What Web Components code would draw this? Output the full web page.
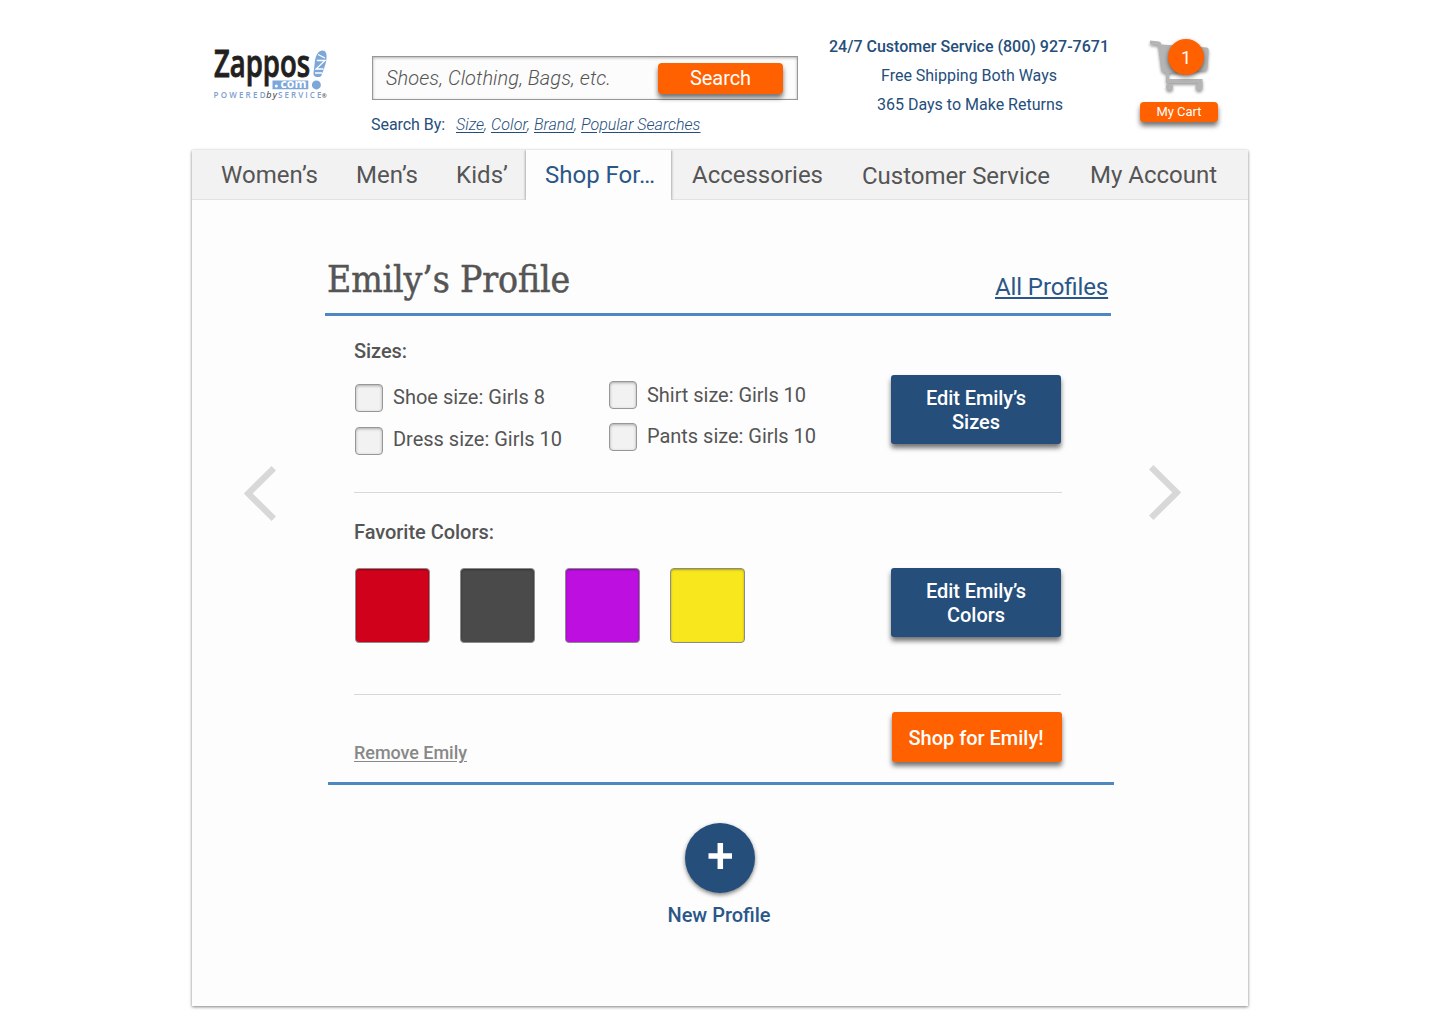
<!DOCTYPE html>
<html lang="en"><head><meta charset="utf-8"><title>Emily’s Profile</title>
<style>
body{margin:0;background:#fff;font-family:Roboto,"Liberation Sans",sans-serif;color:#555}
</style></head><body>
<shop-page></shop-page>
<script>
const define=(name,html,setup)=>customElements.define(name,class extends HTMLElement{
  connectedCallback(){
    if(this.shadowRoot)return;
    const root=this.attachShadow({mode:"open"});
    root.innerHTML=html;
    if(setup)setup(this,root);
  }
});

/* One line of text tracked so that it fills the width given in "w". */
define("fit-text",`<style>:host{display:block;white-space:nowrap;font-feature-settings:"liga" 1}span{display:inline-block;vertical-align:top}</style><span><slot></slot></span>`,(el,root)=>{
  const w=+el.getAttribute("w"),s=root.querySelector("span");
  el.style.width=w+"px";
  const natural=s.getBoundingClientRect().width;
  el.style.letterSpacing=(w-natural)/el.textContent.length+"px";
});

define("zappos-logo",`<style>:host{display:block;width:116px;height:52px}svg{display:block;overflow:visible}</style>
<svg width="116" height="52" viewBox="212 49 116 52">
<text x="214" y="77.200" font-family="Open Sans" font-weight="600" font-size="37" fill="#231f20" stroke="#231f20" stroke-width=".9" textLength="96" lengthAdjust="spacingAndGlyphs">Zappos</text>
<path d="M272.500 80.500H308.300V89.300H272.500Z" fill="#7da7d9"/>
<circle cx="276.300" cy="86" r="1.500" fill="#fff"/>
<text x="280.500" y="88" font-family="Open Sans" font-weight="700" font-size="12" fill="#fff" textLength="26" lengthAdjust="spacingAndGlyphs">com</text>
<path d="M322 50.500C326 50 327.300 54 326.300 60C325.500 66 322.500 72 321.500 75.500C320.500 78 313.800 77.500 313.500 74.500C313.500 71 314.300 68 314.600 64C315 57 317.500 51 322 50.500Z" fill="#7da7d9"/>
<path d="M318 54.500L325 58M316.800 60.500H325L316 69H323.500M315 73H322" fill="none" stroke="#fff" stroke-width="1.300"/>
<circle cx="316.400" cy="84.900" r="4.500" fill="#7da7d9"/>
<g font-family="Open Sans" font-size="8" fill="#7da0cf" font-weight="600"><text x="213.500" y="98" textLength="52">POWERED</text><text x="266.300" y="98" font-size="9" fill="#333" font-style="italic" font-weight="400" textLength="10.500">by</text><text x="278" y="98" textLength="43.500">SERVICE</text><text x="321.800" y="98" font-size="6" fill="#444">®</text></g>
</svg>`);

define("push-button",`<style>
:host{display:flex;flex-direction:column;align-items:center;justify-content:center;box-sizing:border-box;border-radius:3px;background:#254e7b;color:#fff;font-size:20px;font-weight:500;line-height:24px;width:170px;box-shadow:0 4px 5px rgba(0,0,0,.55)}
:host([kind=orange]){background:#ff6000}
</style><slot></slot>`);

define("search-box",`<style>
:host{display:block;width:426px}
.field{display:flex;box-sizing:border-box;height:44px;border:1px solid #979797;background:#fcfcfc;box-shadow:inset 0 1px 3px rgba(0,0,0,.3);padding:6px 0 0 13px}
.hint{font-size:20px;font-weight:300;font-style:italic;line-height:31px;margin-right:47px}
push-button{width:125px;height:31px;border-radius:4px;font-weight:400;padding-bottom:2px}
.by{display:flex;margin:13px 0 0 -1px;height:24px;line-height:24px;font-size:16px;color:#254e7b}
.by i{font-weight:300;display:flex}.by u{text-underline-offset:2px}
</style>
<div class="field"><fit-text class="hint" w="225">Shoes, Clothing, Bags, etc.</fit-text><push-button kind="orange"><fit-text w="61">Search</fit-text></push-button></div>
<div class="by"><fit-text w="74" style="margin-right:11px">Search By:</fit-text><i><fit-text w="31" style="margin-right:4px"><u>Size</u>,</fit-text><fit-text w="39" style="margin-right:4px"><u>Color</u>,</fit-text><fit-text w="43" style="margin-right:4px"><u>Brand</u>,</fit-text><fit-text w="119.5"><u>Popular Searches</u></fit-text></i></div>`);

define("service-info",`<style>:host{display:flex;flex-direction:column;align-items:center;width:284px;font-size:16px;line-height:29px;color:#254e7b}b{font-weight:500}</style>
<b><fit-text w="280">24/7 Customer Service (800) 927-7671</fit-text></b><fit-text w="176">Free Shipping Both Ways</fit-text><fit-text w="186" style="margin-left:2px">365 Days to Make Returns</fit-text>`);

define("cart-button",`<style>
:host{display:block;width:78px}
.icon{position:relative;height:64px}
svg{display:block;margin-left:6px;filter:drop-shadow(0 2px 1.500px rgba(0,0,0,.4))}
.count{position:absolute;left:28px;top:1px;width:36px;height:36px;border-radius:50%;background:#ff6000;color:#fff;text-align:center;font-size:18px;line-height:37px;box-shadow:0 2px 4px rgba(0,0,0,.5)}
push-button{width:78px;height:20px;font-size:13px;font-weight:400;line-height:22px;border-radius:4px}
</style>
<div class="icon"><svg width="66" height="58" viewBox="1146 38 66 58"><path d="M1150 40.500L1159 41.500Q1161 42 1161.500 44.500L1207 47.500Q1209 48 1208.700 50L1207.500 68Q1207.300 70 1205 70.500L1169 73V79H1202.500V87H1198V83H1166V73L1163 72Q1161.500 71.500 1161 69L1158 45L1150 44Z" fill="#b5b5b5"/><circle cx="1169.500" cy="87" r="3.500" fill="#b5b5b5"/><circle cx="1199" cy="87" r="3.500" fill="#b5b5b5"/></svg><div class="count">1</div></div>
<push-button kind="orange"><fit-text w="45">My Cart</fit-text></push-button>`);

define("site-header",`<style>
:host{display:flex;align-items:flex-start;height:150px;width:1056px;margin:0 auto}
zappos-logo{margin:49px 44px 0 20px}search-box{margin-top:56px}service-info{margin:32px 0 0 29px}cart-button{margin:38px 0 0 29px}
</style><zappos-logo></zappos-logo><search-box></search-box><service-info></service-info><cart-button></cart-button>`);

define("nav-tab",`<style>
:host{display:block;box-sizing:border-box;height:50px;font-size:24px;line-height:50px;color:#555}
:host([active]){color:#2a5788;background:#fdfdfd;width:145px;padding-left:19px;box-shadow:0 0 3px rgba(0,0,0,.5);clip-path:inset(0 -3px 0 -3px)}
</style><slot></slot>`);

define("nav-bar",`<style>:host{display:flex;height:50px;background:#f2f2f2;box-shadow:inset 0 -1px 0 #e2e2e2}nav-tab{flex:none}</style>
<nav-tab style="margin-left:29px"><fit-text w="97">Women’s</fit-text></nav-tab>
<nav-tab style="margin-left:38px"><fit-text w="62">Men’s</fit-text></nav-tab>
<nav-tab style="margin-left:38px"><fit-text w="52">Kids’</fit-text></nav-tab>
<nav-tab active style="margin-left:18px"><fit-text w="110">Shop For…</fit-text></nav-tab>
<nav-tab style="margin-left:21px"><fit-text w="131">Accessories</fit-text></nav-tab>
<nav-tab style="margin-left:39px;padding-top:1px"><fit-text w="188">Customer Service</fit-text></nav-tab>
<nav-tab style="margin-left:40px"><fit-text w="127">My Account</fit-text></nav-tab>`);

define("size-check",`<style>
:host{display:flex;height:28px;font-size:20px;line-height:28px}
.box{width:28px;height:28px;box-sizing:border-box;border:1px solid #979797;border-radius:4px;background:#f2f2f2;box-shadow:inset 0 1px 3px rgba(0,0,0,.3);margin-right:10px}
div.t{margin-top:var(--lift,-1px)}
</style><div class="box"></div><div class="t"><slot></slot></div>`);

define("color-swatch",`<style>:host{display:block;box-sizing:border-box;width:75px;height:75px;border:1px solid #8b8b8b;border-radius:4px;box-shadow:inset 0 1px 2px rgba(0,0,0,.3)}</style>`,el=>{el.style.backgroundColor=el.getAttribute("color")});

define("arrow-button",`<style>:host{display:block;width:32px;height:55px}:host([next]) svg{transform:scaleX(-1)}svg{display:block}</style>
<svg width="32" height="55"><path d="M29.800 2.300L4.200 27.500L29.800 52.700" fill="none" stroke="#d8d8d8" stroke-width="6.400"/></svg>`);

define("profile-card",`<style>
:host{display:block;width:789px}
header{display:flex;justify-content:space-between;box-sizing:border-box;width:786px;height:60px;border-bottom:3px solid #4f88c1;padding:0 3px 0 2px}
h1{margin:0;font:400 37px/48px "Roboto Slab","DejaVu Serif Condensed","DejaVu Serif",serif;font-stretch:condensed;-webkit-text-stroke:.5px #555}
.all{font-size:24px;line-height:30px;margin-top:16px;color:#2a5788}
u{text-underline-offset:2px}.all u{text-decoration-thickness:2px}
section{display:flex;justify-content:space-between;box-sizing:border-box;width:708px;margin-left:29px;border-bottom:1px solid #d8d8d8}
h2{margin:0;font-size:20px;font-weight:500;line-height:28px}
.sizes{height:177px;padding:21px 1px 0 0}.sizes push-button{margin-top:38px;height:69px}
.cols{display:flex;margin-top:16px}
.col{display:flex;flex-direction:column;gap:15px;width:254px;padding-top:3px}.col+.col{padding-top:0;gap:14px}
.colors{height:202px;padding:25px 0 0;margin-left:29px;width:707px}.colors push-button{margin-top:50px;height:69px}
.sw{display:flex;gap:30px;margin:22px 0 0 1px}
footer{display:flex;justify-content:space-between;box-sizing:border-box;width:786px;height:90px;margin-left:3px;border-bottom:3px solid #4f88c1;padding:17px 52px 0 26px}
footer push-button{height:50px;padding:2px 2px 0 0}
.rm{font-size:18px;font-weight:500;line-height:24px;margin-top:29px;color:#888}
</style>
<header><h1><fit-text w="243">Emily’s Profile</fit-text></h1><fit-text class="all" w="113"><u>All Profiles</u></fit-text></header>
<section class="sizes"><div><h2><fit-text w="53">Sizes:</fit-text></h2>
<div class="cols" style="margin-left:1px"><div class="col"><size-check><fit-text w="152">Shoe size: Girls 8</fit-text></size-check><size-check style="--lift:-2px"><fit-text w="169">Dress size: Girls 10</fit-text></size-check></div>
<div class="col"><size-check style="--lift:0px"><fit-text w="159">Shirt size: Girls 10</fit-text></size-check><size-check><fit-text w="169">Pants size: Girls 10</fit-text></size-check></div></div></div>
<push-button><fit-text w="100">Edit Emily’s</fit-text><fit-text w="48">Sizes</fit-text></push-button></section>
<section class="colors"><div><h2><fit-text w="140">Favorite Colors:</fit-text></h2>
<div class="sw"><color-swatch color="#d0021b"></color-swatch><color-swatch color="#4a4a4a"></color-swatch><color-swatch color="#bd10e0"></color-swatch><color-swatch color="#f8e71c"></color-swatch></div></div>
<push-button><fit-text w="100">Edit Emily’s</fit-text><fit-text w="58">Colors</fit-text></push-button></section>
<footer><fit-text class="rm" w="113"><u>Remove Emily</u></fit-text><push-button kind="orange"><fit-text w="135">Shop for Emily!</fit-text></push-button></footer>`);

define("new-profile",`<style>
:host{display:flex;flex-direction:column;align-items:center;font-size:20px;font-weight:500;line-height:28px;color:#2a5788}
.plus{width:70px;height:70px;border-radius:50%;background:#254e7b;box-shadow:0 2px 4px rgba(0,0,0,.5);margin-bottom:8px}svg{display:block}
fit-text{margin-right:2px}
</style><div class="plus"><svg width="70" height="70"><path d="M35.300 20V46M23.500 33H47" stroke="#fff" stroke-width="5.500"/></svg></div><fit-text w="103">New Profile</fit-text>`);

define("shop-page",`<style>
:host{display:block;width:1440px;height:1024px;overflow:hidden}
main{display:block;width:1056px;height:856px;margin:0 auto;background:#fdfdfd;box-shadow:0 1px 3px rgba(0,0,0,.5)}
.row{display:flex;padding-top:56px;align-items:flex-start}
.prev{margin:210px 49px 0 52px}.next{margin:209px 0 0 35px}
new-profile{margin-top:38px}
</style><site-header></site-header><main><nav-bar></nav-bar><div class="row"><arrow-button class="prev"></arrow-button><profile-card></profile-card><arrow-button class="next" next></arrow-button></div><new-profile></new-profile></main>`);
</script></body></html>
